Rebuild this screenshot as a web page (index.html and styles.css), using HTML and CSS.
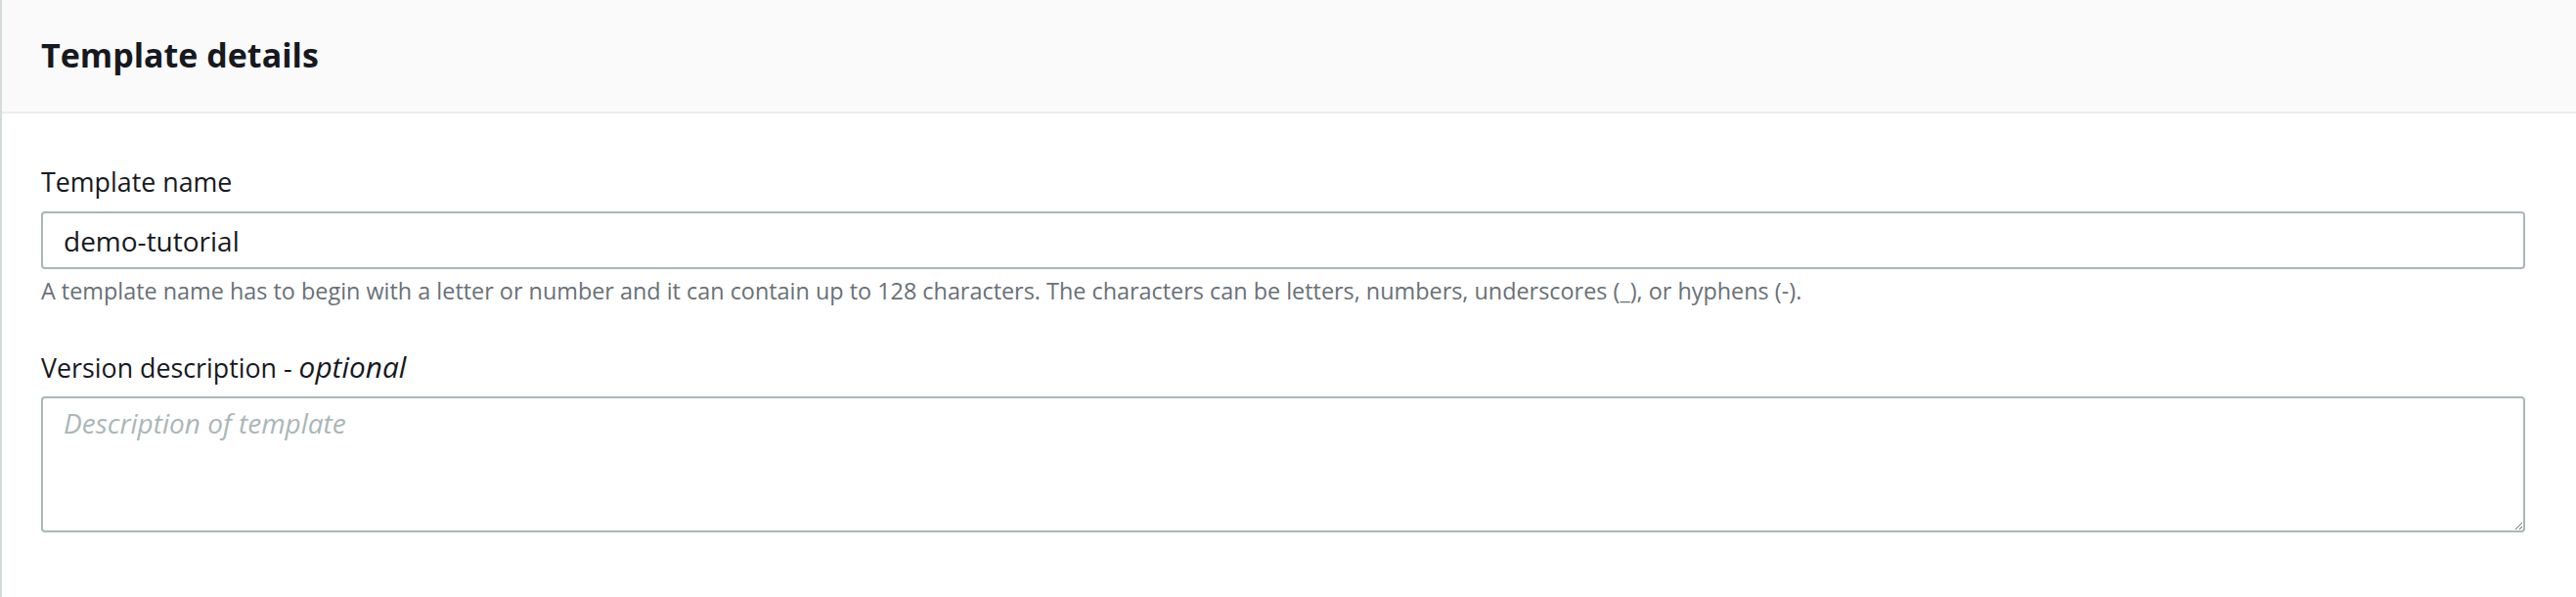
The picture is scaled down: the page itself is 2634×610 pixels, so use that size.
FILE: index.html
```html
<!DOCTYPE html>
<html lang="en">
<head>
<meta charset="utf-8">
<title>Template details</title>
<link rel="stylesheet" href="styles.css">
</head>
<body>
<div class="panel">
  <div class="panel-header">
    <h2 class="panel-title">Template details</h2>
  </div>
  <div class="panel-body">
    <div class="field">
      <label class="field-label" for="tname">Template name</label>
      <input class="field-input" id="tname" type="text" value="demo-tutorial">
      <div class="field-help">A template name has to begin with a letter or number and it can contain up to 128 characters. The characters can be letters, numbers, underscores (_), or hyphens (-).</div>
    </div>
    <div class="field field-second">
      <label class="field-label" for="tdesc">Version description - <i>optional</i></label>
      <textarea class="field-textarea" id="tdesc" placeholder="Description of template"></textarea>
    </div>
  </div>
</div>
</body>
</html>
```
FILE: styles.css
```css
html, body {
  margin: 0;
  padding: 0;
  background: #ffffff;
}
body {
  font-family: "Open Sans", "Noto Sans", Arial, sans-serif;
  color: #16191f;
}
.panel {
  border-left: 2px solid #d5dbdb;
  min-height: 610px;
  box-sizing: border-box;
}
.panel-header {
  background: #fafafa;
  border-bottom: 2px solid #eaeded;
  height: 116px;
  box-sizing: border-box;
  padding: 33px 52px 0 40px;
}
.panel-title {
  margin: 0;
  font-size: 34px;
  line-height: 46px;
  font-weight: 700;
  color: #16191f;
}
.panel-body {
  padding: 52px 52px 0 40px;
}
.field {
  display: flex;
  flex-direction: column;
}
.field-second {
  margin-top: 45px;
}
.field-label {
  font-size: 26.8px;
  line-height: 36px;
  color: #16191f;
  margin-bottom: 11px;
}
.field-label i {
  font-style: italic;
  font-size: 29.8px;
}
.field-input {
  font-family: inherit;
  font-size: 28px;
  line-height: 36px;
  height: 59px;
  box-sizing: border-box;
  padding: 9px 21px;
  border: 2px solid #aab7b8;
  border-radius: 4px;
  color: #16191f;
  background: #fff;
  outline: none;
  margin: 1px 0 0 0;
}
.field-help {
  margin-top: 7px;
  font-size: 23.4px;
  line-height: 30px;
  color: #687078;
}
.field-textarea {
  font-family: inherit;
  font-size: 28px;
  line-height: 36px;
  height: 139px;
  box-sizing: border-box;
  padding: 7px 21px;
  border: 2px solid #aab7b8;
  border-radius: 4px;
  color: #16191f;
  background: #fff;
  outline: none;
  margin: 0;
  resize: both;
}
.field-textarea::placeholder {
  color: #aab7b8;
  font-style: italic;
}
```
